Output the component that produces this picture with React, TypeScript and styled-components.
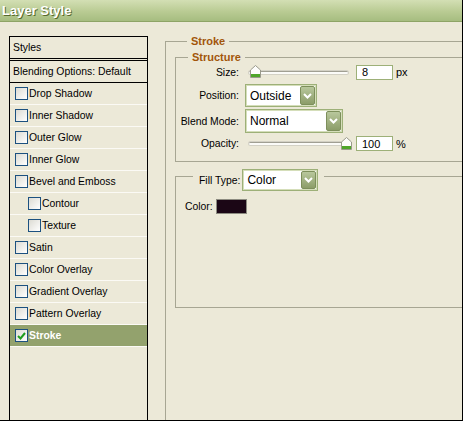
import React from 'react';
import styled, { createGlobalStyle } from 'styled-components';

const GlobalStyle = createGlobalStyle`
  html, body {
    margin: 0;
    padding: 0;
    background: #ece9d8;
  }
  * {
    box-sizing: border-box;
  }
`;

// Dialog frame
const Window = styled.div`
  width: 463px;
  height: 421px;
  display: flex;
  flex-direction: column;
  overflow: hidden;
  background: #ece9d8;
  border-right: 1px solid #000;
  border-bottom: 1px solid #000;
  font-family: 'Liberation Sans', Arial, sans-serif;
  font-size: 10.4px;
  color: #000;
`;

const TitleBar = styled.div`
  flex: none;
  height: 22px;
  padding-left: 2px;
  display: flex;
  align-items: center;
  background: linear-gradient(#d3dfb4, #b9cb93 55%, #a6bd80);
  border-bottom: 1px solid #8ea466;
`;

const Title = styled.span`
  font-size: 13px;
  font-weight: bold;
  color: #fff;
  text-shadow: 1px 1px 0 #55692e;
`;

const Body = styled.div`
  flex: 1;
  display: flex;
  min-height: 0;
`;

// Left list of effects
const StylesPanel = styled.div`
  flex: none;
  width: 139px;
  margin: 14px 0 0 9px;
  border: 1px solid #000;
  border-bottom: none;
  display: flex;
  flex-direction: column;
`;

const HeadRow = styled.div`
  height: 22px;
  padding-left: 3px;
  display: flex;
  align-items: center;
  border-bottom: 1px solid #000;
`;

const HeadGap = styled.div`
  height: 2px;
  border-bottom: 1px solid #000;
`;

const EffectRow = styled.div<{ $indent?: boolean; $selected?: boolean }>`
  height: 22px;
  padding-left: ${p => (p.$indent ? 18 : 5)}px;
  display: flex;
  align-items: center;
  gap: 1px;
  border-bottom: 1px solid #fbfaf5;
  background: ${p => (p.$selected ? '#93a26d' : 'transparent')};
  color: ${p => (p.$selected ? '#fff' : '#000')};
  font-weight: ${p => (p.$selected ? 'bold' : 'normal')};
`;

const Box = styled.span`
  flex: none;
  width: 13px;
  height: 13px;
  border: 1px solid #1c5180;
  background: linear-gradient(135deg, #dcdbd3, #fff);
  display: flex;
  align-items: center;
  justify-content: center;
`;

// Right settings area
const Settings = styled.div`
  flex: 1;
  margin-left: 17px;
  padding-top: 13px;
  display: flex;
  flex-direction: column;
`;

const Group = styled.fieldset`
  margin: 0;
  min-width: 0;
  padding: 0 0 0 9px;
  border: none;
  border-top: 1px solid #a7a693;
  border-left: 1px solid #a7a693;
`;

const StrokeGroup = styled(Group)`
  flex: 1;
`;

const StructureGroup = styled(Group)`
  margin-top: 3px;
  padding: 0 0 10px 0;
  border-bottom: 1px solid #a7a693;
  display: flex;
  flex-direction: column;
`;

const FillGroup = styled(Group)`
  padding: 8px 0 93px 9px;
  border-bottom: 1px solid #a7a693;
`;

const Legend = styled.legend`
  margin-left: 12px;
  padding: 0 4px;
  line-height: 13px;
  font-size: 11px;
  font-weight: bold;
  color: #a2560b;
`;

const FillLegend = styled.legend`
  margin-left: 8px;
  padding: 7px 6px 0 6px;
  display: flex;
  align-items: center;
  gap: 2px;
`;

const Row = styled.div<{ $h: number; $gap: number }>`
  height: ${p => p.$h}px;
  margin-top: ${p => p.$gap}px;
  display: flex;
  align-items: center;
`;

const Label = styled.span`
  width: 63px;
  margin-right: 6px;
  text-align: right;
`;

const SliderBox = styled.div`
  position: relative;
  width: 104px;
  height: 100%;
  display: flex;
  align-items: center;
`;

const Track = styled.div`
  margin-left: 4px;
  width: 99px;
  height: 3px;
  border-radius: 2px;
  border-top: 1px solid #a09f93;
  background: #fbfbf8;
  box-shadow: 0 0 0 1px #d3d1c5;
`;

const Thumb = styled.svg`
  position: absolute;
  top: 1px;
`;

const Field = styled.div`
  width: 37px;
  height: 15px;
  margin-left: 7px;
  padding-left: 5px;
  display: flex;
  align-items: center;
  background: #fff;
  border: 1px solid #9db078;
  font-size: 11px;
`;

const Unit = styled.span`
  margin-left: 3px;
  font-size: 11px;
`;

const Select = styled.div<{ $w: number; $h: number }>`
  width: ${p => p.$w}px;
  height: ${p => p.$h}px;
  padding: 1px 1px 1px 4px;
  display: flex;
  align-items: stretch;
  background: #fff;
  border: 1px solid #9db078;
  box-shadow: inset 0 0 0 1px #d5deba;
`;

const SelectText = styled.span`
  flex: 1;
  display: flex;
  align-items: center;
  font-size: 12px;
`;

const SelectButton = styled.span`
  flex: none;
  width: 15px;
  border-radius: 2px;
  border: 1px solid #7d8f5b;
  background: linear-gradient(#b8c79c, #8c9d69);
  display: flex;
  align-items: center;
  justify-content: center;
`;

const ColorRow = styled.div`
  display: flex;
  align-items: center;
  gap: 3px;
`;

const Swatch = styled.span`
  width: 31px;
  height: 15px;
  background: #1b0615;
  border: 1px solid #8c8b80;
`;

const Check = () => (
  <svg width="9" height="8" viewBox="0 0 9 8">
    <path d="M1 4 L3.5 6.5 L8 1" fill="none" stroke="#1e9e1e" strokeWidth="2" />
  </svg>
);

const Checkbox: React.FC<{ checked?: boolean }> = ({ checked }) => (
  <Box>{checked && <Check />}</Box>
);

const Chevron = () => (
  <svg width="9" height="6" viewBox="0 0 9 6">
    <path d="M1 1 L4.5 4.5 L8 1" fill="none" stroke="#fff" strokeWidth="2" />
  </svg>
);

const Dropdown: React.FC<{ value: string; w: number; h: number }> = ({ value, w, h }) => (
  <Select $w={w} $h={h}>
    <SelectText>{value}</SelectText>
    <SelectButton>
      <Chevron />
    </SelectButton>
  </Select>
);

const Slider: React.FC<{ value: number; max: number }> = ({ value, max }) => (
  <SliderBox>
    <Track />
    <Thumb width="11" height="13" viewBox="0 0 11 13" style={{ left: 2 + (value / max) * 94 }}>
      <path d="M0.5 5 L5.5 0.5 L10.5 5 L10.5 12.5 L0.5 12.5 Z" fill="#fdfdfb" stroke="#9a9a8c" />
      <rect x="1" y="9" width="9" height="3" fill="#4fa62a" />
    </Thumb>
  </SliderBox>
);

const effects = [
  { name: 'Drop Shadow' },
  { name: 'Inner Shadow' },
  { name: 'Outer Glow' },
  { name: 'Inner Glow' },
  { name: 'Bevel and Emboss' },
  { name: 'Contour', indent: true },
  { name: 'Texture', indent: true },
  { name: 'Satin' },
  { name: 'Color Overlay' },
  { name: 'Gradient Overlay' },
  { name: 'Pattern Overlay' },
  { name: 'Stroke', selected: true },
];

const App: React.FC = () => (
  <>
    <GlobalStyle />
    <Window>
      <TitleBar>
        <Title>Layer Style</Title>
      </TitleBar>
      <Body>
        <StylesPanel>
          <HeadRow>Styles</HeadRow>
          <HeadGap />
          <HeadRow>Blending Options: Default</HeadRow>
          {effects.map(e => (
            <EffectRow key={e.name} $indent={e.indent} $selected={e.selected}>
              <Checkbox checked={e.selected} />
              {e.name}
            </EffectRow>
          ))}
        </StylesPanel>

        <Settings>
          <StrokeGroup>
            <Legend>Stroke</Legend>
            <StructureGroup>
              <Legend>Structure</Legend>
              <Row $h={16} $gap={0}>
                <Label>Size:</Label>
                <Slider value={8} max={250} />
                <Field>8</Field>
                <Unit>px</Unit>
              </Row>
              <Row $h={23} $gap={4}>
                <Label>Position:</Label>
                <Dropdown value="Outside" w={72} h={23} />
              </Row>
              <Row $h={24} $gap={2}>
                <Label>Blend Mode:</Label>
                <Dropdown value="Normal" w={98} h={24} />
              </Row>
              <Row $h={15} $gap={3}>
                <Label>Opacity:</Label>
                <Slider value={100} max={100} />
                <Field>100</Field>
                <Unit>%</Unit>
              </Row>
            </StructureGroup>

            <FillGroup>
              <FillLegend>
                <span>Fill Type:</span>
                <Dropdown value="Color" w={76} h={22} />
              </FillLegend>
              <ColorRow>
                <span>Color:</span>
                <Swatch />
              </ColorRow>
            </FillGroup>
          </StrokeGroup>
        </Settings>
      </Body>
    </Window>
  </>
);

export default App;
